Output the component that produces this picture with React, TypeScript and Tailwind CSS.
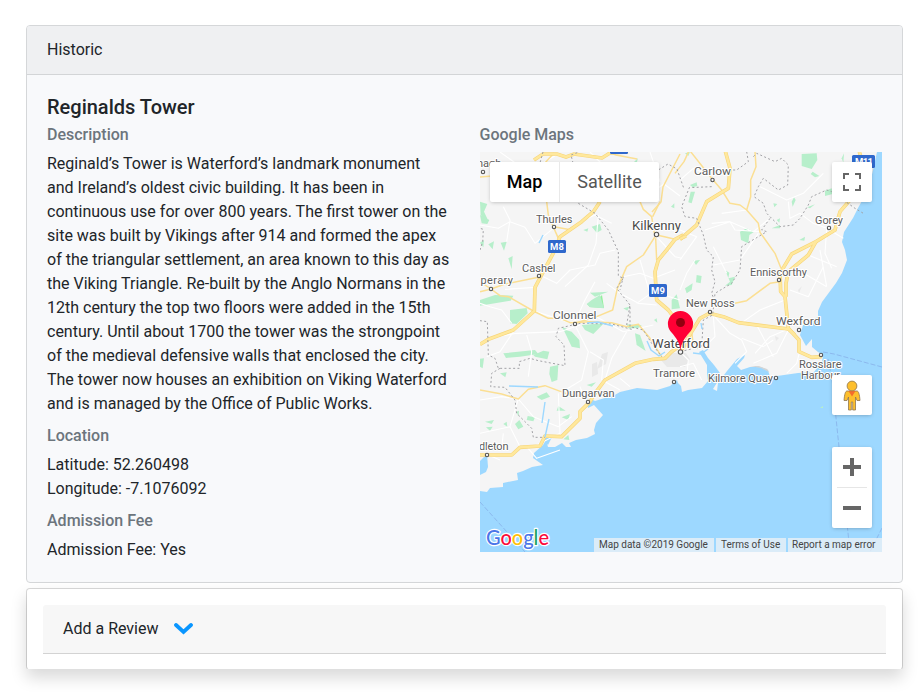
import React from "react";

const description = [
  "Reginald’s Tower is Waterford’s landmark monument",
  "and Ireland’s oldest civic building. It has been in",
  "continuous use for over 800 years. The first tower on the",
  "site was built by Vikings after 914 and formed the apex",
  "of the triangular settlement, an area known to this day as",
  "the Viking Triangle. Re-built by the Anglo Normans in the",
  "12th century the top two floors were added in the 15th",
  "century. Until about 1700 the tower was the strongpoint",
  "of the medieval defensive walls that enclosed the city.",
  "The tower now houses an exhibition on Viking Waterford",
  "and is managed by the Office of Public Works.",
];

type Town = { name: string; x: number; y: number; w: number; dot?: [number, number]; big?: boolean };

const towns: Town[] = [
  { name: "Carlow", x: 694, y: 175, w: 37, dot: [712.5, 180] },
  { name: "Thurles", x: 536, y: 223, w: 36.5, dot: [554, 227] },
  { name: "Kilkenny", x: 632, y: 230, w: 49, dot: [656.5, 234.5], big: true },
  { name: "Cashel", x: 522, y: 272, w: 33.5, dot: [539, 276] },
  { name: "Gorey", x: 815, y: 224, w: 28, dot: [829, 228] },
  { name: "Enniscorthy", x: 750, y: 276, w: 57, dot: [779, 280] },
  { name: "New Ross", x: 686, y: 307, w: 48.5, dot: [710, 312] },
  { name: "Clonmel", x: 553, y: 319, w: 43.5, dot: [575, 324] },
  { name: "Wexford", x: 776, y: 325, w: 44.5, dot: [799, 330] },
  { name: "Waterford", x: 652, y: 347.5, w: 58, dot: [680.5, 352], big: true },
  { name: "Tramore", x: 653, y: 377, w: 42, dot: [674, 382] },
  { name: "Kilmore Quay", x: 708, y: 382, w: 65, dot: [776, 378] },
  { name: "Rosslare", x: 799, y: 367.5, w: 42.5, dot: [821, 355] },
  { name: "Harbour", x: 801, y: 378.5, w: 39 },
  { name: "Dungarvan", x: 562, y: 397, w: 52.5, dot: [588, 402] },
];

// The west tile starts at (480, 200), the east tile at (680, 150); both are drawn at three units per pixel.
const west = {
  greens: [
    "M0 5L22 12L12 35L25 62L2 45ZM0 45L28 60L22 72L5 70Z", "M62 128L80 125L72 152Z", "M25 133L42 124L38 148Z", "M85 175L98 168L95 208Z",
    "M0 128L12 120L10 142Z", "M310 90L325 85L322 95ZM335 80L360 72L365 90L350 98Z",
    "M330 278L385 275L345 290ZM335 300L360 285L372 325L330 322L320 312Z", "M90 330L140 324L143 340L110 372L90 370Z",
    "M0 300L45 285L100 287L92 302L45 310L0 317Z", "M305 375L372 370L340 402L315 390Z",
    "M250 388L275 395L298 420L300 445L275 440ZM245 380L262 387L255 395Z", "M465 400L480 405L497 453L470 435Z",
    "M70 460L165 450L175 462L120 470L78 474Z", "M160 465L190 452L208 455L202 478L165 470Z",
    "M210 500L235 495L232 540L215 546L208 522Z", "M0 476L12 475L8 505L0 500Z", "M60 520L80 517L76 532Z",
    "M320 555L348 547L335 560Z", "M170 590L200 577L210 590L185 600Z", "M110 635L117 632L115 650ZM105 672L118 660L130 680L115 688Z",
    "M143 648L165 652L160 664L140 660Z", "M230 632L235 618L257 632ZM245 652L270 642L265 660Z",
    "M15 665L42 660L35 672ZM18 682L38 680L30 692Z", "M70 672L80 665L82 680Z", "M250 718L265 705L268 720Z",
    "M575 300L590 283L600 325L575 328ZM522 360L530 355L532 368Z", "M573 20L583 10L583 25Z", "M430 325L448 320L442 332Z",
    "M440 373L485 376L478 385L445 385Z",
  ],
  white: [
    "M0 75L55 85L90 65L135 82M70 20L90 60L80 125M135 82L165 130L220 85",
    "M240 110L300 65L345 45L395 70M355 45L348 130L325 195L255 260",
    "M190 230L230 250L270 210L345 195L360 160L405 150M175 240L165 262L75 268",
    "M345 245L315 300L285 365M380 250L420 280L475 310L530 315",
    "M0 310L30 320L65 330L95 370M163 333L270 368L330 340L430 395L520 375",
    "M110 400L240 395L300 375M110 400L20 415M100 395L60 455L20 470M140 405L155 455L145 530",
    "M285 375L325 455L305 540L240 580M440 395L395 475L375 540M330 455L370 480L365 540",
    "M0 600L65 590L115 597L90 680L0 700M115 597L160 650L235 680L275 650M90 680L120 740",
    "M235 580L240 700L160 740M300 560L315 600M420 535L450 560M375 545L420 570",
    "M25 765L60 780M65 745L70 700M140 740L170 775L240 750M530 110L585 170L606 175",
    "M430 230L480 220L520 235L585 210M470 310L520 275L600 300M480 180L510 280",
  ],
  thin: [
    "M200 5L205 45L222 85L235 115M222 80L275 90", "M0 275L33 267L75 252L175 232",
    "M0 245L33 267L60 287L85 290L160 333L205 355L240 355L270 368L330 365L395 368L440 380L475 373L510 415L545 470",
    "M285 370L350 350L398 330L412 265L440 200L490 165L525 110M480 5L490 28L515 50L523 100M540 5L518 50",
    "M530 105L560 112L585 118M527 115L530 180", "M0 570L65 582L115 597L145 568L195 557L265 583L310 590",
  ],
  major: [
    "M360 5L340 35L305 65L240 110L225 150L190 215L165 262L163 333L100 390L25 418L0 433",
    "M610 105L585 118L560 150L535 180L525 215L530 300L565 330L580 350L600 385",
    "M610 430L575 455L555 475L520 478L465 490L375 540L345 580L330 605L300 635L300 655L245 710L195 708L180 738L120 742L95 765L0 765",
  ],
  borders: [
    "M295 10L345 40L385 90L415 155L415 228L430 235L410 265L450 315L450 380L490 390L515 430L545 470",
    "M455 388L395 372L300 370L235 385L228 410L252 435L255 497L175 482L150 475L118 485L118 505L55 505L45 475L25 465L22 365L0 362",
    "M60 505L35 520L32 560L75 562L105 600L110 640L155 685L160 712L195 712", "M0 150L8 125L10 88L0 85",
    "M430 230L420 270M440 375L450 315",
  ],
};

const east = {
  greens: [
    "M365 12L410 10L412 30L395 57L365 48Z", "M398 65L418 78L405 82L392 72Z", "M30 105L50 97L52 108L38 112ZM32 125L45 125L35 160L25 157Z",
    "M335 155L342 142L347 150L338 170ZM280 160L292 162L283 172Z", "M180 245L200 235L223 245L208 255L205 280L183 270Z",
    "M275 235L300 225L300 235ZM290 210L300 205L298 218Z", "M358 270L375 260L373 272Z", "M382 172L405 163L390 175Z",
    "M40 332L60 330L48 345Z", "M50 375L65 378L62 400L48 397ZM15 415L38 400L35 420L20 430Z",
    "M135 360L148 368L145 385L165 380L155 405L135 407L150 395Z", "M435 122L455 115L458 132L435 138Z", "M485 25L492 10L490 38Z", "M15 10L30 6L25 18Z",
  ],
  white: [
    "M0 90L40 55L85 75M95 220L150 215L220 245L270 205M75 240L150 215L165 240L240 245",
    "M125 190L200 180M240 110L320 150L370 130L430 70M325 155L330 205L360 190L400 220L440 235L490 265",
    "M235 250L180 330L100 345M0 330L50 260L0 240M45 330L20 370L0 420M100 290L140 370",
    "M330 360L380 375L440 410M440 235L435 310L455 355M385 315L470 350M420 300L440 410",
    "M330 420L385 440L430 350M315 450L240 480L190 515M95 490L150 550L185 570L200 605L165 640",
    "M330 535L270 560L225 610M325 540L290 610L220 640M360 600L350 640L320 670M230 525L280 620",
    "M100 500L105 560L75 590M0 605L25 630L20 680M0 650L40 640L65 690M185 565L250 590L280 570",
  ],
  thin: [
    "M28 0L12 35L-15 70M28 0L95 85L125 120L150 160L180 165L200 180L235 220L240 247L285 310L303 355",
    "M225 5L228 50L212 90L212 140L200 180", "M165 460L200 452L270 400L300 395", "M35 545L38 570L55 595M0 610L25 580L35 545",
  ],
  major: [
    "M135 0L150 55L145 115L120 130L80 155L50 225L0 268", "M538 5L545 30L525 120L510 150L480 185L470 220L465 240L408 275",
    "M408 275L335 312L300 370L302 425L315 440L325 535L357 570L357 605L395 622L425 620",
    "M408 275L385 315L325 365L318 400L318 440", "M0 605L35 545L60 505L88 490L130 500L175 518L325 537L345 555",
  ],
  borders: [
    "M200 5L205 35L170 60L150 60M220 20L230 10L285 35L305 25L325 45L323 105L295 120L250 85L235 110L222 140L250 160L260 190L300 230L340 225L360 205L385 165L395 140L440 120L455 125",
    "M270 205L245 240L260 245L185 290L180 360L155 400L105 430L98 495L70 510L65 590L0 605",
    "M95 110L28 113L5 170L15 200L50 205L70 255L80 300L100 320L95 360L105 395L95 430L105 455", "M490 150L525 175L550 190",
  ],
};

const north = {
  thin: ["M608 152L616 155L637 159", "M480 177L492 176"],
  major: ["M534 160L543 154L557 154L566 157L574 154L602 158L610 153L628 152", "M680 239L686 236"],
};

type Tile = typeof west;

function TileArt({ tile, transform }: { tile: Tile; transform: string }) {
  return (
    <g transform={transform} fill="none" strokeLinejoin="round">
      <g fill="#b7efcb">{tile.greens.map((d) => <path key={d} d={d} />)}</g>
      <g stroke="#fff" strokeWidth="3.3">{tile.white.map((d) => <path key={d} d={d} />)}</g>
      <g stroke="#fbdf93" strokeWidth="4.5">{tile.thin.map((d) => <path key={d} d={d} />)}</g>
      <g stroke="#f6d57b" strokeWidth="11">{tile.major.map((d) => <path key={d} d={d} />)}</g>
      <g stroke="#ffe89c" strokeWidth="7.5">{tile.major.map((d) => <path key={d} d={d} />)}</g>
      <g stroke="#a2a2a6" strokeWidth="3" strokeDasharray="6 7">{tile.borders.map((d) => <path key={d} d={d} />)}</g>
    </g>
  );
}

function MapArtwork() {
  return (
    <svg className="block h-[400px] w-[402px] overflow-hidden" viewBox="480 152 402 400" role="img" aria-label="Map">
      <rect x="480" y="152" width="402" height="400" fill="#f5f5f5" />
      <g fill="#e9e9e9">
        <path d="M602 354l6-2-2 12-9 5z" />
        <path d="M592 364l5-2 1 12-6 3z" />
        <path d="M660 359l10-6 16 0 4 6-5 8-18 0z" />
        <path d="M775 336l4 2-3 3z" />
        <path d="M798 290l4-4-3 7z" />
      </g>
      <path d="M594 303l8-8 2 13-14-1-3-3z" fill="#95ef9d" />
      <path
        fill="#9dd8ff"
        d="M877 152L873 170L869 188L858 208L853 218L844 232L842 242L845 250L847 260L842 273L836 283L822 302L818 311L818 317L803 325L800 335L806 346L812 339L812 347L818 352L823 355L822 362L814 372L798 373L770 377L768 370L761 367L750 367L741 370L737 366L744 358L745 355L737 359L727 371L718 383L717 391L713 389L718 381L720 373L714 365L708 358L703 350L699 352L707 365L707 374L708 381L702 388L688 390L682 392L681 386L678 383L677 380L670 386L657 390L637 388L620 392L613 396L608 397L595 401L591 399L587 402L588 408L594 405L603 415L596 423L594 430L595 434L587 438L576 440L569 443L571 447L566 447L562 443L555 447L548 447L546 440L543 445L534 453L533 458L543 465L532 467L523 471L517 473L518 480L503 483L503 487L490 488L487 492L480 491V552H882V152Z"
      />
      <path d="M480 461l5-5 2-2 1 13-2 5-6 3z" fill="#9dd8ff" />
      <path d="M545 437l7 0-4 8-3-3z" fill="#9dd8ff" />
      <path d="M750 366l9 0 8 3 2 3-8-4z" fill="#d5d5d5" />
      <TileArt tile={west} transform="translate(480 200) scale(.33333)" />
      <TileArt tile={east} transform="translate(680 150) scale(.33333)" />
      <g fill="#b7efcb">
        <path d="M630 166l8-8-2 8z" />
        <path d="M820 408l3-2 0 2z" />
      </g>
      <g fill="none" stroke="#fff" strokeWidth="1.1">
        <path d="M590 152l20 20M500 152l28 20 30-18M640 200l24-16 16 12M650 152l10 30" />
      </g>
      <g fill="none" stroke="#fbdf93" strokeWidth="1.5">{north.thin.map((d) => <path key={d} d={d} />)}
        <path d="M554 153l-10 11M680 154l-17 33-2 15-9 10" />
      </g>
      <g fill="none" stroke="#f6d57b" strokeWidth="3.6">{north.major.map((d) => <path key={d} d={d} />)}</g>
      <g fill="none" stroke="#ffe89c" strokeWidth="2.5">{north.major.map((d) => <path key={d} d={d} />)}</g>
      <path d="M573 163l-2-8 8-3M655 172l13-8 9 5 7 20M543 152l-5 18" fill="none" stroke="#a2a2a6" strokeDasharray="2 2.3" />
      <g fill="none" stroke="#9dd8ff" strokeWidth="1.4">
        <path d="M543 235l-4 8M647 341l4 9 8 6 6-4M693 353l8 1 7-5M701 323l1 6M509 386l29 1M587 323l11-1 15 4M545 402l-3 21M549 419l-4 18" />
      </g>
      <g fill="none" stroke="#8cb9ee" strokeWidth="1" strokeDasharray="5 2">
        <path d="M823 352l11 2 48 13" />
        <path d="M828 359l4 20 7 68 11 105" />
        <path d="M480 502l45 50" />
        <path d="M882 528l-12 24" />
      </g>
      <g fill="#2f68cc">
        <rect x="548" y="240" width="18" height="13" rx="1.5" />
        <rect x="649" y="284" width="18" height="13" rx="1.5" />
        <rect x="852" y="155" width="23" height="13" rx="1.5" />
        <rect x="610" y="145" width="18" height="9" rx="1.5" />
      </g>
      <g className="font-['Roboto',sans-serif] text-[9.5px] font-bold" fill="#fff">
        <text x="550" y="250" textLength="14">M8</text>
        <text x="651" y="294" textLength="14">M9</text>
        <text x="855" y="165" textLength="18">M11</text>
      </g>
      <g className="font-['Roboto',sans-serif]" fill="#5c5c5c" stroke="#fff" strokeWidth="2" strokeLinejoin="round" paintOrder="stroke">
        {towns.map((t) => (
          <text key={t.name} x={t.x} y={t.y} textLength={t.w} lengthAdjust="spacingAndGlyphs" className={t.big ? "text-[12.5px]" : "text-[11px]"} fill={t.big ? "#4a4a4a" : "#5c5c5c"}>
            {t.name}
          </text>
        ))}
        <text x="477" y="167" className="text-[11px]">nagh</text>
        <text x="474" y="284" textLength="39" className="text-[11px]">pperary</text>
        <text x="479" y="450" textLength="29.5" className="text-[11px]">dleton</text>
      </g>
      <g fill="#f5f5f5" stroke="#555" strokeWidth="1.1">
        {towns.map((t) => t.dot && <circle key={t.name} cx={t.dot[0]} cy={t.dot[1]} r={t.big ? 2.2 : 1.7} />)}
        <circle cx="483" cy="172" r="1.7" />
        <circle cx="491" cy="289" r="1.7" />
        <circle cx="487" cy="455" r="1.7" />
      </g>
      <path d="M680.5 351c-.8-9-4.5-13-8.5-18a12.6 12.6 0 1 1 17 0c-4 5-7.700 9-8.500 18z" fill="#ff0035" />
      <circle cx="680.5" cy="322.5" r="4.5" fill="#910010" />
      <text x="486" y="545" textLength="63" lengthAdjust="spacingAndGlyphs" className="font-['Lato',sans-serif] text-[21px] font-medium" stroke="#fff" strokeWidth="2.5" strokeLinejoin="round" paintOrder="stroke">
        <tspan fill="#4c76e8">G</tspan><tspan fill="#fb0b3b">o</tspan><tspan fill="#ffc107">o</tspan><tspan fill="#4c76e8">g</tspan><tspan fill="#1aa260">l</tspan><tspan fill="#fb0b3b">e</tspan>
      </text>
    </svg>
  );
}

const controlShadow = "shadow-[0_1px_4px_-1px_rgba(0,0,0,0.3)]";

function GoogleMap() {
  return (
    <div className="relative h-[400px] w-[402px] overflow-hidden">
      <MapArtwork />
      <div className={`absolute left-[10px] top-[10px] flex h-10 rounded-[2px] bg-white text-[18px] leading-10 ${controlShadow}`}>
        <button className="w-[69px] text-center font-medium text-black">Map</button>
        <button className="w-[100px] border-l border-[#e9e9e9] text-center text-[#565656]">Satellite</button>
      </div>
      <button className={`absolute right-[10px] top-[10px] flex size-10 items-center justify-center rounded-[2px] bg-white ${controlShadow}`} aria-label="Toggle fullscreen view">
        <svg className="size-[18px]" viewBox="0 0 18 18" fill="none" stroke="#666" strokeWidth="2">
          <path d="M1 6V1h5M12 1h5v5M17 12v5h-5M6 17H1v-5" />
        </svg>
      </button>
      <button className={`absolute right-[10px] top-[223px] flex size-10 items-center justify-center rounded-[2px] bg-white ${controlShadow}`} aria-label="Street View">
        <svg className="h-[31px] w-[18px]" viewBox="0 0 18 31" fill="#fdbf2d" stroke="#8f7650" strokeWidth=".8">
          <path d="M4 11h10c1.500 0 2.500 3 3 9.500h-3L12.500 17v13H9.700v-8H8.300v8H5.500V17L4 20.500H1C1.500 14 2.500 11 4 11z" />
          <path d="M5.500 11h7L9 16.500z" fill="#f36c2c" stroke="none" />
          <circle cx="9" cy="6" r="4.900" />
        </svg>
      </button>
      <div className={`absolute bottom-6 right-[10px] flex h-[81px] w-10 flex-col items-center rounded-[2px] bg-white ${controlShadow}`}>
        <button className="flex h-10 items-center" aria-label="Zoom in">
          <svg className="size-[18px]" viewBox="0 0 18 18" fill="#666"><path d="M7 0h4v7h7v4h-7v7H7v-7H0V7h7z" /></svg>
        </button>
        <div className="h-px w-[30px] bg-[#e6e6e6]" />
        <button className="flex h-10 items-center" aria-label="Zoom out">
          <svg className="size-[18px]" viewBox="0 0 18 18" fill="#666"><path d="M0 7h18v4H0z" /></svg>
        </button>
      </div>
      <div className="absolute bottom-0 right-0 flex h-[14px] gap-[2px] text-[10px] leading-[14px] text-[#444]">
        <span className="w-[120px] whitespace-nowrap bg-[#f5f5f5]/70 pl-[5px]">Map data ©2019 Google</span>
        <span className="w-[70px] whitespace-nowrap bg-[#f5f5f5]/70 pl-[5px]">Terms of Use</span>
        <span className="w-[94px] whitespace-nowrap bg-[#f5f5f5]/70 pl-[4px]">Report a map error</span>
      </div>
    </div>
  );
}

export default function App() {
  return (
    <main className="h-[692px] overflow-hidden bg-white pl-[26px] pt-[25px] font-['Roboto',sans-serif] text-base leading-6 text-[#212529]">
      <section className="h-[558px] w-[877px] overflow-hidden rounded border border-[#d5d7d9] bg-[#f8f9fb]">
        <header className="h-[49px] border-b border-[#d3d5d7] bg-[#eff0f2] px-5 pt-3">Historic</header>
        <div className="px-5 pt-5">
          <h5 className="text-[20px] font-medium leading-6">Reginalds Tower</h5>
          <div className="flex">
            <div className="w-[432.5px] shrink-0">
              <h6 className="mt-[6px] text-base font-medium leading-[19px] text-[#6c757d]">Description</h6>
              <p className="mt-2">
                {description.map((line) => (
                  <span key={line} className="block whitespace-nowrap">{line}</span>
                ))}
              </p>
              <h6 className="mt-[10px] text-base font-medium leading-[19px] text-[#6c757d]">Location</h6>
              <p className="mt-2">Latitude: 52.260498<br />Longitude: -7.1076092</p>
              <h6 className="mt-[10px] text-base font-medium leading-[19px] text-[#6c757d]">Admission Fee</h6>
              <p className="mt-2">Admission Fee: Yes</p>
            </div>
            <div>
              <h6 className="mb-2 mt-[6px] text-base font-medium leading-[19px] text-[#6c757d]">Google Maps</h6>
              <div className="ml-[0.5px]"><GoogleMap /></div>
            </div>
          </div>
        </div>
      </section>
      <section className="mt-[5px] h-[82px] w-[877px] rounded border border-black/15 border-b-transparent bg-white bg-clip-padding p-4 shadow-[0_8px_16px_rgba(0,0,0,0.15)]">
        <button className="flex h-[49px] w-full items-center rounded-t-[3px] border-b border-[#d3d3d3] bg-[#f7f7f7] px-5">
          <span>Add a Review</span>
          <svg className="ml-[15px] h-3 w-[19px]" viewBox="0 0 19 12" fill="none" stroke="#0a96ff" strokeWidth="3.8" strokeLinecap="round" strokeLinejoin="miter">
            <path d="M2 2l7.500 7L17 2" />
          </svg>
        </button>
      </section>
    </main>
  );
}
